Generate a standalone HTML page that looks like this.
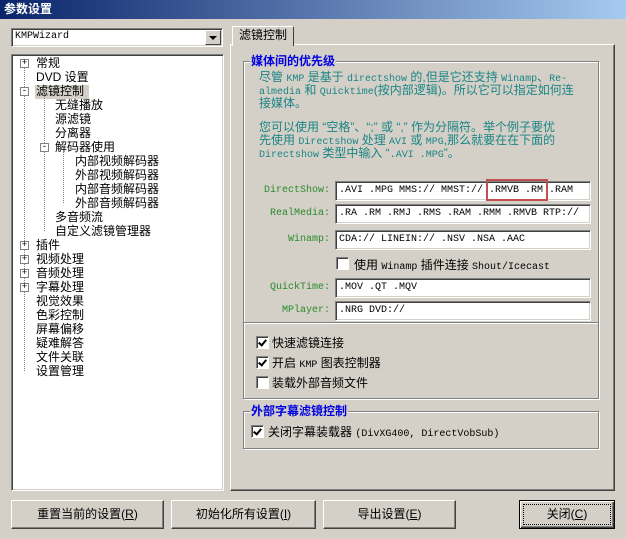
<!DOCTYPE html>
<html><head><meta charset="utf-8"><style>
*{margin:0;padding:0;box-sizing:border-box}
body{width:626px;height:539px;background:#d4d0c8;position:relative;overflow:hidden;font-family:"Liberation Sans","Noto Sans CJK SC",sans-serif;font-size:12px;color:#000}
.a{position:absolute;white-space:nowrap}
.m{font-family:"Liberation Mono",monospace;font-size:10px}
.sunk{border-top:1px solid #808080;border-left:1px solid #808080;border-right:1px solid #fff;border-bottom:1px solid #fff;box-shadow:inset 1px 1px 0 #404040, inset -1px -1px 0 #d4d0c8}
.grp{position:absolute;border:1px solid #808080;box-shadow:1px 1px 0 #fff, inset 1px 1px 0 #fff}
.gt{position:absolute;background:#d4d0c8;color:#0000e0;font-weight:bold;padding:0 1px;line-height:14px}
.tx{color:#1a8585;line-height:13px;height:13px;overflow:visible}
.lbl{color:#2a8a2a;text-align:right;width:90px}
.inp{position:absolute;background:#fff;height:20px;left:335px;width:256px;line-height:17px;padding-left:3px}
.cb{position:absolute;width:13px;height:13px;background:#fff;border-top:1px solid #808080;border-left:1px solid #808080;border-right:1px solid #fff;border-bottom:1px solid #fff;box-shadow:inset 1px 1px 0 #404040}
.cb.c::after{content:"";position:absolute;left:3px;top:1px;width:3px;height:6px;border-right:2px solid #000;border-bottom:2px solid #000;transform:rotate(40deg)}
.btn{position:absolute;top:500px;height:29px;background:#d4d0c8;border-top:1px solid #fff;border-left:1px solid #fff;border-right:1px solid #404040;border-bottom:1px solid #404040;box-shadow:inset -1px -1px 0 #808080;text-align:center;line-height:26px}
.pl{position:absolute;width:9px;height:9px;border:1px solid #808080;background:#fff;font-size:9px;line-height:7px;text-align:center;font-family:"Liberation Mono",monospace}
.tree div{position:absolute;white-space:nowrap;line-height:14px}
</style></head><body>
<div class="a" style="left:0;top:0;width:626px;height:19px;background:linear-gradient(90deg,#0a246a,#a6caf0)"></div>
<div class="a" style="left:4px;top:2px;color:#fff;font-weight:bold;line-height:15px">参数设置</div>

<div class="a sunk" style="left:11px;top:28px;width:212px;height:19px;background:#fff"></div>
<div class="a m" style="left:15px;top:31px;font-size:10px">KMPWizard</div>
<div class="a" style="left:205px;top:30px;width:16px;height:15px;background:#d4d0c8;border-top:1px solid #fff;border-left:1px solid #fff;border-right:1px solid #404040;border-bottom:1px solid #404040"></div>
<div class="a" style="left:209px;top:36px;width:0;height:0;border-left:4px solid transparent;border-right:4px solid transparent;border-top:4px solid #000"></div>

<div class="a sunk" style="left:11px;top:54px;width:213px;height:437px;background:#fff"></div>
<div class="tree">
<div style="left:35px;top:85px;width:54px;height:14px;background:#d4d0c8"></div>
<div style="left:36px;top:56px">常规</div>
<div style="left:36px;top:70px">DVD 设置</div>
<div style="left:36px;top:84px">滤镜控制</div>
<div style="left:55px;top:98px">无缝播放</div>
<div style="left:55px;top:112px">源滤镜</div>
<div style="left:55px;top:126px">分离器</div>
<div style="left:55px;top:140px">解码器使用</div>
<div style="left:75px;top:154px">内部视频解码器</div>
<div style="left:75px;top:168px">外部视频解码器</div>
<div style="left:75px;top:182px">内部音频解码器</div>
<div style="left:75px;top:196px">外部音频解码器</div>
<div style="left:55px;top:210px">多音频流</div>
<div style="left:55px;top:224px">自定义滤镜管理器</div>
<div style="left:36px;top:238px">插件</div>
<div style="left:36px;top:252px">视频处理</div>
<div style="left:36px;top:266px">音频处理</div>
<div style="left:36px;top:280px">字幕处理</div>
<div style="left:36px;top:294px">视觉效果</div>
<div style="left:36px;top:308px">色彩控制</div>
<div style="left:36px;top:322px">屏幕偏移</div>
<div style="left:36px;top:336px">疑难解答</div>
<div style="left:36px;top:350px">文件关联</div>
<div style="left:36px;top:364px">设置管理</div>
</div>
<div class="a" style="left:24px;top:63px;height:308px;border-left:1px dotted #808080"></div>
<div class="a" style="left:44px;top:91px;height:140px;border-left:1px dotted #808080"></div>
<div class="a" style="left:63px;top:147px;height:56px;border-left:1px dotted #808080"></div>
<div class="pl" style="left:20px;top:59px">+</div>
<div class="pl" style="left:20px;top:87px">-</div>
<div class="pl" style="left:40px;top:143px">-</div>
<div class="pl" style="left:20px;top:241px">+</div>
<div class="pl" style="left:20px;top:255px">+</div>
<div class="pl" style="left:20px;top:269px">+</div>
<div class="pl" style="left:20px;top:283px">+</div>

<div class="a" style="left:230px;top:44px;width:385px;height:447px;border-top:1px solid #fff;border-left:1px solid #fff;border-right:1px solid #404040;border-bottom:1px solid #404040;box-shadow:inset -1px -1px 0 #808080"></div>
<div class="a" style="left:232px;top:26px;width:62px;height:20px;background:#d4d0c8;border-top:1px solid #fff;border-left:1px solid #fff;border-right:1px solid #404040;padding-left:6px;line-height:17px">滤镜控制</div>

<div class="grp" style="left:243px;top:61px;width:356px;height:338px"></div>
<div class="a" style="left:244px;top:322px;width:354px;border-top:1px solid #808080;border-bottom:1px solid #fff"></div>
<div class="gt" style="left:250px;top:54px">媒体间的优先级</div>
<div class="a tx" style="left:259px;top:71px">尽管 <span class="m">KMP</span> 是基于 <span class="m">directshow</span> 的,但是它还支持 <span class="m">Winamp</span>、<span class="m">Re-</span></div>
<div class="a tx" style="left:259px;top:84px"><span class="m">almedia</span> 和 <span class="m">Quicktime</span>(按内部逻辑)。所以它可以指定如何连</div>
<div class="a tx" style="left:259px;top:97px">接媒体。</div>
<div class="a tx" style="left:259px;top:121px">您可以使用 “空格”、“;” 或 “,” 作为分隔符。举个例子要优</div>
<div class="a tx" style="left:259px;top:134px">先使用 <span class="m">Directshow</span> 处理 <span class="m">AVI</span> 或 <span class="m">MPG</span>,那么就要在在下面的</div>
<div class="a tx" style="left:259px;top:147px"><span class="m">Directshow</span> 类型中输入 “<span class="m">.AVI .MPG</span>”。</div>

<div class="a lbl m" style="left:240px;top:185px">DirectShow:</div>
<div class="a lbl m" style="left:240px;top:208px">RealMedia:</div>
<div class="a lbl m" style="left:240px;top:234px">Winamp:</div>
<div class="a lbl m" style="left:240px;top:282px">QuickTime:</div>
<div class="a lbl m" style="left:240px;top:305px">MPlayer:</div>
<div class="inp sunk m" style="top:181px;overflow:hidden">.AVI .MPG MMS:// MMST:// .RMVB .RM .RAM .M</div>
<div class="inp sunk m" style="top:204px;overflow:hidden">.RA .RM .RMJ .RMS .RAM .RMM .RMVB RTP:// R</div>
<div class="inp sunk m" style="top:230px">CDA:// LINEIN:// .NSV .NSA .AAC</div>
<div class="inp sunk m" style="top:278px">.MOV .QT .MQV</div>
<div class="inp sunk m" style="top:301px">.NRG DVD://</div>
<div class="a" style="left:486px;top:179px;width:62px;height:22px;border:2px solid #c05050"></div>
<div class="cb" style="left:336px;top:257px"></div>
<div class="a" style="left:354px;top:256px">使用 <span class="m">Winamp</span> 插件连接 <span class="m">Shout/Icecast</span></div>

<div class="cb c" style="left:256px;top:336px"></div><div class="a" style="left:272px;top:334px">快速滤镜连接</div>
<div class="cb c" style="left:256px;top:356px"></div><div class="a" style="left:272px;top:354px">开启 <span class="m">KMP</span> 图表控制器</div>
<div class="cb" style="left:256px;top:376px"></div><div class="a" style="left:272px;top:374px">装载外部音频文件</div>

<div class="grp" style="left:243px;top:411px;width:356px;height:38px"></div>
<div class="gt" style="left:250px;top:404px">外部字幕滤镜控制</div>
<div class="cb c" style="left:251px;top:425px"></div><div class="a" style="left:268px;top:423px">关闭字幕装载器 <span class="m">(DivXG400, DirectVobSub)</span></div>

<div class="btn" style="left:11px;width:153px">重置当前的设置(<u>R</u>)</div>
<div class="btn" style="left:171px;width:145px">初始化所有设置(<u>I</u>)</div>
<div class="btn" style="left:323px;width:133px">导出设置(<u>E</u>)</div>
<div class="btn" style="left:519px;width:96px;border:1px solid #000;box-shadow:inset 1px 1px 0 #fff,inset -1px -1px 0 #404040,inset -2px -2px 0 #808080">关闭(<u>C</u>)</div>
<div class="a" style="left:523px;top:504px;width:88px;height:21px;border:1px dotted #000"></div>
</body></html>
